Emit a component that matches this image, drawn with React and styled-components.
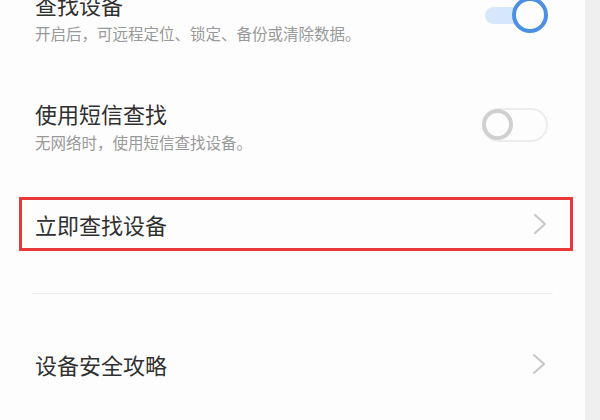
import React from 'react'
import styled, { createGlobalStyle } from 'styled-components'

const GlobalStyle = createGlobalStyle`
  html, body {
    margin: 0;
    padding: 0;
    height: 420px;
    overflow: hidden;
    background: #efefef;
    font-family: "Noto Sans CJK SC", "Noto Sans", sans-serif;
  }
`

export default function App() {
    return (
        <>
            <GlobalStyle />
            <Page>
                <Panel>
                    <List>
                        <SwitchRow>
                            <TextBlock>
                                <Title>查找设备</Title>
                                <Sub>开启后，可远程定位、锁定、备份或清除数据。</Sub>
                            </TextBlock>
                            <Toggle on />
                        </SwitchRow>
                        <SwitchRow>
                            <TextBlock>
                                <Title>使用短信查找</Title>
                                <Sub>无网络时，使用短信查找设备。</Sub>
                            </TextBlock>
                            <Toggle />
                        </SwitchRow>
                        <Highlight>
                            <Title>立即查找设备</Title>
                            <Chevron />
                        </Highlight>
                        <Divider />
                        <NavRow>
                            <Title>设备安全攻略</Title>
                            <Chevron />
                        </NavRow>
                    </List>
                </Panel>
                <Edge />
            </Page>
        </>
    )
}

function Toggle({ on }) {
    return (
        <Switch>
            <Track $on={on} />
            <Knob $on={on} />
        </Switch>
    )
}

function Chevron() {
    return (
        <svg width="14" height="22" viewBox="0 0 14 22" fill="none">
            <path d="M2 2 L12 11 L2 20" stroke="#c6c6c6" strokeWidth="2" strokeLinecap="round" strokeLinejoin="round" />
        </svg>
    )
}

const Page = styled.div`
    display: grid;
    grid-template-columns: 585px 15px;
    height: 420px;
`

const Panel = styled.div`
    background: #fdfdfd;
    overflow: hidden;
`

const Edge = styled.div`
    background: #efefef;
`

const List = styled.div`
    display: flex;
    flex-direction: column;
    margin-top: -38px;
`

const SwitchRow = styled.div`
    display: flex;
    align-items: center;
    justify-content: space-between;
    padding: 27px 37px 28px 35px;
`

const TextBlock = styled.div`
    display: flex;
    flex-direction: column;
`

const Title = styled.div`
    font-size: 22px;
    line-height: 30px;
    color: #303030;
`

const Sub = styled.div`
    font-size: 15.5px;
    line-height: 20px;
    margin-top: 4px;
    color: #999999;
`

const Switch = styled.div`
    position: relative;
    width: 66px;
    height: 34px;
    flex-shrink: 0;
`

const Track = styled.div`
    position: absolute;
    ${p => p.$on ? `
        left: 3px;
        top: 8px;
        width: 50px;
        height: 17px;
        border-radius: 9px;
        background: #d6e6fb;
    ` : `
        left: 0;
        top: 0;
        width: 62px;
        height: 30px;
        border: 2px solid #ececec;
        border-radius: 17px;
    `}
`

const Knob = styled.div`
    position: absolute;
    box-sizing: border-box;
    border-radius: 50%;
    background: #fdfdfd;
    ${p => p.$on ? `
        right: 0;
        top: -2px;
        width: 36px;
        height: 36px;
        border: 4px solid #4d8fe3;
    ` : `
        left: 0;
        top: 1px;
        width: 31px;
        height: 31px;
        border: 4px solid #d0d0d0;
    `}
`

const Highlight = styled.div`
    display: flex;
    align-items: center;
    justify-content: space-between;
    height: 48px;
    margin: 17px 12px 0 19px;
    padding: 0 23px 0 13px;
    border: 3px solid #e8383b;
`

const Divider = styled.div`
    height: 1px;
    margin: 42px 32px 0 32px;
    background: #efefef;
`

const NavRow = styled.div`
    display: flex;
    align-items: center;
    justify-content: space-between;
    height: 56px;
    margin-top: 42px;
    padding: 0 39px 0 35px;
`
